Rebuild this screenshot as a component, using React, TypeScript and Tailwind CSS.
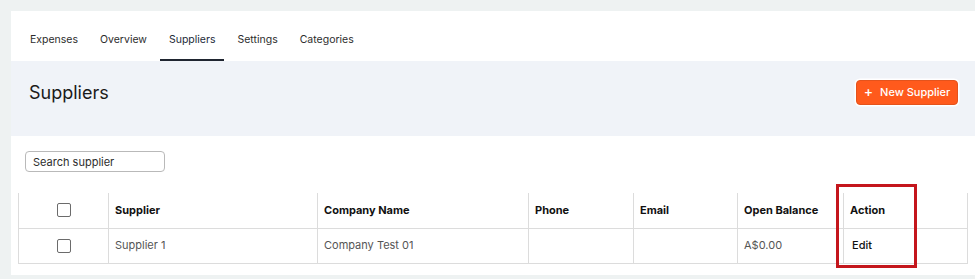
import React from "react";

const tabs = ["Expenses", "Overview", "Suppliers", "Settings", "Categories"];

const columns = [
  { label: "", width: "w-[90px]" },
  { label: "Supplier", width: "w-[209px]" },
  { label: "Company Name", width: "w-[211px]" },
  { label: "Phone", width: "w-[105px]" },
  { label: "Email", width: "w-[104px]" },
  { label: "Open Balance", width: "w-[106px]" },
  { label: "Action", width: "w-[124px]" },
];

const suppliers = [
  { name: "Supplier 1", company: "Company Test 01", phone: "", email: "", balance: "A$0.00" },
];

const Checkbox = () => (
  <div className="mx-auto h-[14px] w-[14px] rounded-[2px] border border-[#6b6b6b] bg-white" />
);

export default function App() {
  return (
    <div
      className="h-[279px] w-[975px] overflow-hidden bg-[#eef2f2] pl-[11px] pt-[11px]"
      style={{ fontFamily: "Inter, 'Noto Sans', sans-serif" }}
    >
      <div className="bg-white">
        {/* tabs */}
        <nav className="flex h-[50px] gap-[4px] px-[10px]">
          {tabs.map((tab) => {
            const active = tab === "Suppliers";
            return (
              <div
                key={tab}
                className={
                  "flex h-full items-center border-b-2 px-[9px] pt-[10px] text-[10.5px] " +
                  (active ? "border-[#1f2530] text-[#1d2b3a]" : "border-transparent text-[#2d2d2d]")
                }
              >
                {tab}
              </div>
            );
          })}
        </nav>

        {/* page header */}
        <div className="flex h-[75px] items-center justify-between bg-[#f0f3f8] pb-[13px] pl-[18px] pr-[17px]">
          <h1 className="text-[18px] text-[#1a1a1a]">Suppliers</h1>
          <button className="flex h-[25px] w-[102px] items-center justify-center gap-[7px] rounded-[4px] border border-[#e4531c] bg-[#ff5a1c] text-[11px] font-medium text-white shadow-[0_0_0_1.5px_#ffffff]">
            <span className="text-[14px] leading-none">+</span>
            New Supplier
          </button>
        </div>

        {/* list */}
        <div className="pb-[11px] pl-[7px] pr-[8px] pt-[15px]">
          <div className="pl-[7px]">
            <input
              placeholder="Search supplier"
              className="block h-[21px] w-[140px] rounded-[4px] border border-[#b9b9b9] px-[7px] text-[11px] text-[#2d2d2d] placeholder:text-[#2d2d2d] outline-none"
            />
          </div>

          <div className="relative mt-[21px]">
            <table className="w-[949px] table-fixed border-collapse text-[11px]">
              <thead>
                <tr className="h-[35px]">
                  {columns.map((col, i) => (
                    <th
                      key={i}
                      className={
                        col.width +
                        " border-x border-[#dcdcdc] px-[6px] text-left font-bold text-[#111111]"
                      }
                    >
                      {i === 0 ? <Checkbox /> : col.label}
                    </th>
                  ))}
                </tr>
              </thead>
              <tbody>
                {suppliers.map((s) => (
                  <tr key={s.name} className="h-[35px] border-y border-[#dcdcdc]">
                    <td className="border-x border-[#dcdcdc] px-[6px]">
                      <Checkbox />
                    </td>
                    <td className="border-x border-[#dcdcdc] px-[6px] text-[#555555]">{s.name}</td>
                    <td className="border-x border-[#dcdcdc] px-[6px] text-[#555555]">{s.company}</td>
                    <td className="border-x border-[#dcdcdc] px-[6px] text-[#555555]">{s.phone}</td>
                    <td className="border-x border-[#dcdcdc] px-[6px] text-[#555555]">{s.email}</td>
                    <td className="border-x border-[#dcdcdc] px-[6px] text-[#555555]">{s.balance}</td>
                    <td className="border-x border-[#dcdcdc] px-[8px] font-medium text-[#111111]">Edit</td>
                  </tr>
                ))}
              </tbody>
            </table>

            {/* highlight around the Action column */}
            <div className="pointer-events-none absolute left-[818px] top-[-9px] h-[84px] w-[81px] border-[3px] border-[#c4161c]" />
          </div>
        </div>
      </div>
    </div>
  );
}
